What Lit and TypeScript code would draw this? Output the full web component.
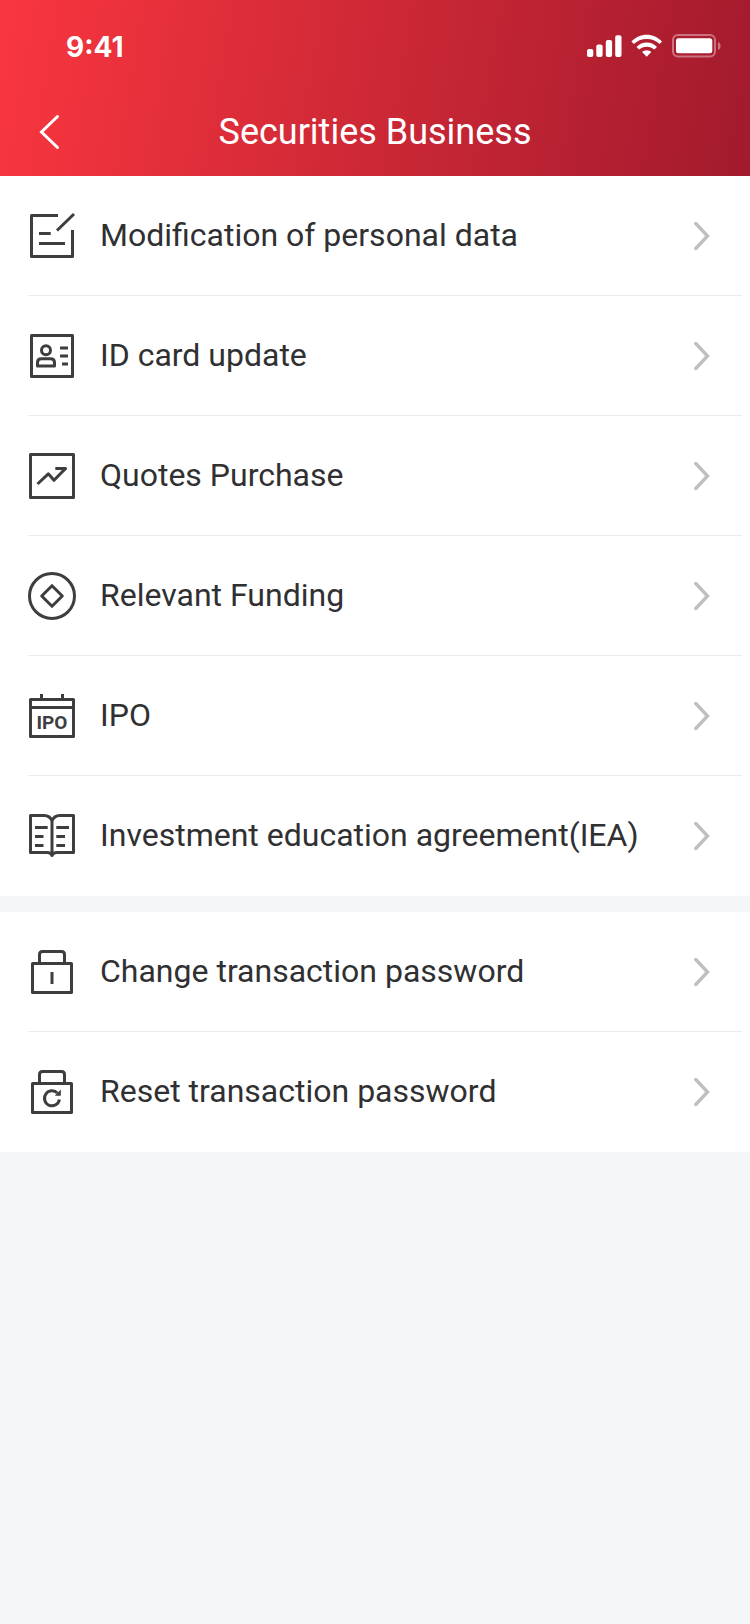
import { LitElement, html, svg, css, SVGTemplateResult } from "lit";
import { customElement, property } from "lit/decorators.js";

const icons: Record<string, SVGTemplateResult> = {
  edit: svg`
    <path d="M30 3.5H3.5V44.5H44.5V18" />
    <path d="M29 18.5L46 2" />
    <path d="M11 21.5H22.7M11 31.5H37" />`,
  idCard: svg`
    <rect x="3.5" y="3.5" width="41" height="41" />
    <circle cx="18" cy="18.3" r="4.5" />
    <path d="M9.5 34V30.5Q9.5 26.8 13.5 26.8H22.5Q26.5 26.8 26.5 30.5V34Z" />
    <path d="M32 16H40M32 24H40M34 32H40" />`,
  quotes: svg`
    <rect x="2.5" y="2.5" width="43" height="43" />
    <path d="M9.5 32L20.3 21.8L26 28.3L37.5 16.5H27.3" />
    <path stroke-width="2" d="M38 16.5L34 20" />`,
  funding: svg`
    <circle cx="24" cy="24" r="22.5" />
    <path d="M24 13.7L34.3 24L24 34.3L13.7 24Z" />`,
  ipo: svg`
    <rect x="2.5" y="7.5" width="43" height="37" />
    <path d="M2.5 15.5H45.5M13.5 2V7M34.5 2V7" />
    <text class="glyph" x="24" y="37" text-anchor="middle">IPO</text>`,
  book: svg`
    <path d="M24 9Q22 3.5 16 3.5H2.5V40.5H19Q23 40.5 24 43.5Q25 40.5 29 40.5H45.5V3.5H32Q26 3.5 24 9V44.5" />
    <path d="M7 15.5H19.7M7 24.5H15.5M7 33.5H15.5M28.3 15.5H41M28.3 24.5H37M28.3 33.5H37" />`,
  lock: svg`
    <rect x="4.5" y="15.5" width="39" height="29" />
    <path d="M11.5 15V6.5Q11.5 3.5 14.5 3.5H33.5Q36.5 3.5 36.5 6.5V15" />
    <path d="M24 24V36" />`,
  reset: svg`
    <rect x="4.5" y="15.5" width="39" height="29" />
    <path d="M11.5 15V6.5Q11.5 3.5 14.5 3.5H33.5Q36.5 3.5 36.5 6.5V15" />
    <path d="M31.4 31.5A7.5 7.5 0 1 1 29.3 25" />
    <path class="solid" d="M32.8 21.5V27.8H26.8Z" />`,
};

const groups = [
  [
    { icon: "edit", label: "Modification of personal data" },
    { icon: "idCard", label: "ID card update" },
    { icon: "quotes", label: "Quotes Purchase" },
    { icon: "funding", label: "Relevant Funding" },
    { icon: "ipo", label: "IPO" },
    { icon: "book", label: "Investment education agreement(IEA)" },
  ],
  [
    { icon: "lock", label: "Change transaction password" },
    { icon: "reset", label: "Reset transaction password" },
  ],
];

@customElement("menu-row")
class MenuRow extends LitElement {
  @property() icon = "";
  @property() label = "";

  static styles = css`
    :host {
      display: block;
    }
    .row {
      box-sizing: border-box;
      display: flex;
      align-items: center;
      height: 120px;
      padding: 0 40px 0 28px;
      color: #303032;
      font-size: 32px;
      line-height: 40px;
      text-decoration: none;
    }
    .icon {
      flex: none;
      width: 48px;
      height: 48px;
      margin-right: 24px;
      overflow: visible;
      fill: none;
      stroke: #3e3e40;
      stroke-width: 3;
      stroke-linejoin: round;
    }
    .glyph {
      fill: #3e3e40;
      stroke: none;
      font: 700 19px Roboto, sans-serif;
    }
    .solid {
      fill: #3e3e40;
      stroke: none;
    }
    .label {
      flex: 1;
      padding-bottom: 2px;
    }
    .arrow {
      flex: none;
      width: 16px;
      height: 30px;
      fill: none;
      stroke: #bfbfbf;
      stroke-width: 3.4;
      stroke-linecap: round;
    }
  `;

  render() {
    return html`<a class="row" href="#">
      <svg class="icon" viewBox="0 0 48 48" aria-hidden="true">${icons[this.icon]}</svg>
      <span class="label">${this.label}</span>
      <svg class="arrow" viewBox="0 0 16 30" aria-hidden="true"><path d="M1.800 2.500L13.500 15L1.800 27.500" /></svg>
    </a>`;
  }
}

@customElement("app-root")
class AppRoot extends LitElement {
  static styles = css`
    :host {
      display: block;
      min-height: 100vh;
      background: #f5f6f8;
      font-family: Roboto, sans-serif;
    }
    .header {
      background: linear-gradient(100deg, #f9363f, #a21a2d);
      color: #fff;
    }
    .status {
      display: flex;
      align-items: center;
      justify-content: space-between;
      height: 88px;
      padding: 4px 28px 0 66px;
      box-sizing: border-box;
    }
    .time {
      padding-top: 2px;
      font: 700 28px/36px Inter, sans-serif;
    }
    .signals {
      width: 136px;
      height: 24px;
      fill: #fff;
    }
    .nav {
      display: grid;
      grid-template-columns: 88px 1fr 88px;
      align-items: center;
      height: 88px;
    }
    .back {
      display: flex;
      align-items: center;
      height: 88px;
      padding: 0 0 0 38px;
      border: 0;
      background: none;
      cursor: pointer;
    }
    .back-icon {
      width: 22px;
      height: 36px;
      fill: none;
      stroke: #fff;
      stroke-width: 3;
      stroke-linecap: round;
    }
    .title {
      margin: 0;
      font-size: 36px;
      font-weight: 400;
      line-height: 44px;
      text-align: center;
    }
    .groups {
      display: grid;
      gap: 16px;
    }
    .group {
      margin: 0;
      padding: 0;
      list-style: none;
      background: #fff;
    }
    .item:not(:last-child) {
      background: linear-gradient(#ebebed, #ebebed) 28px 100% / calc(100% - 36px) 1px no-repeat;
    }
  `;

  render() {
    return html`
      <header class="header">
        <div class="status">
          <span class="time">9:41</span>
          <svg class="signals" viewBox="0 0 136 24" aria-hidden="true">
            <rect x="1" y="15" width="6.3" height="8" rx="2" />
            <rect x="10.3" y="10.6" width="6.3" height="12.4" rx="2" />
            <rect x="19.8" y="6" width="6.3" height="17" rx="2" />
            <rect x="29.2" y="1.3" width="6.3" height="21.7" rx="2" />
            <path d="M60.7 5.1C66 5.1 70.3 7 73.6 10.1L76 7.6C71.8 3.2 66.6 .8 60.7 .8S49.6 3.2 45.4 7.6L47.9 10.1C51.2 7 55.4 5.1 60.7 5.1Z" />
            <path d="M60.7 12.7C63.8 12.7 66.3 13.8 68.3 15.5L71 12.9C68 10 64.7 8.5 60.7 8.5S53.4 10 50.5 12.9L53.1 15.5C55.1 13.8 57.7 12.7 60.7 12.7Z" />
            <path d="M60.7 16.2C58.9 16.2 57.3 16.9 56.1 18.1L60.7 22.8L65.3 18.1C64.1 16.9 62.5 16.2 60.7 16.2Z" />
            <rect x="87" y="1" width="42" height="21.5" rx="5" fill="none" stroke="#fff" stroke-width="2" opacity=".38" />
            <rect x="90" y="4.3" width="36.3" height="15" rx="2.5" />
            <path opacity=".4" d="M132 8C135.4 9.3 135.4 14.7 132 16Z" />
          </svg>
        </div>
        <nav class="nav">
          <button class="back" type="button" aria-label="Back">
            <svg class="back-icon" viewBox="0 0 22 36"><path d="M19.5 2.5L3.5 18L19.5 33.5" /></svg>
          </button>
          <h1 class="title">Securities Business</h1>
        </nav>
      </header>
      <main class="groups">
        ${groups.map(
          (group) => html`<ul class="group">
            ${group.map(
              (item) => html`<li class="item">
                <menu-row .icon=${item.icon} .label=${item.label}></menu-row>
              </li>`,
            )}
          </ul>`,
        )}
      </main>
    `;
  }
}
